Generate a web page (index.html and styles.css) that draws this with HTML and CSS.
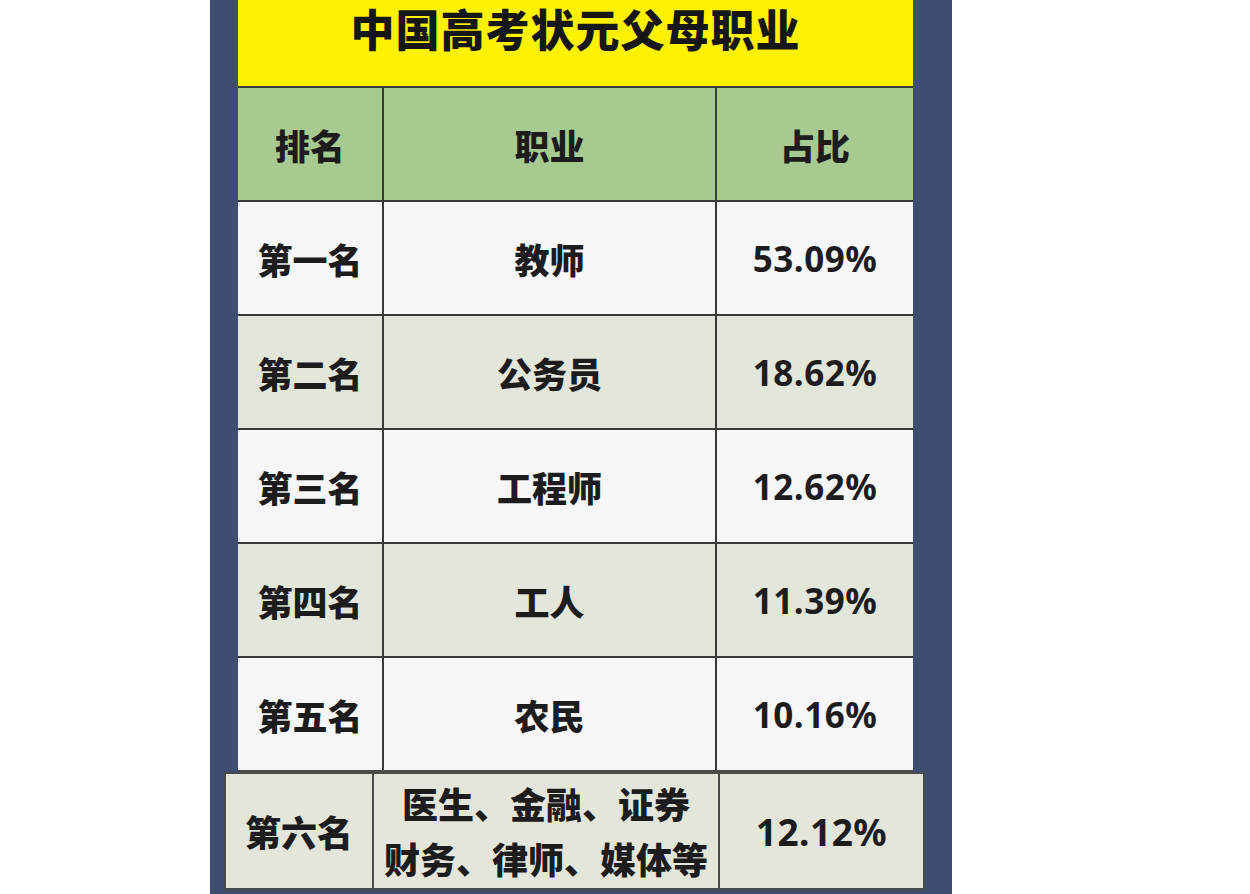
FILE: index.html
```html
<!DOCTYPE html>
<html lang="zh">
<head>
<meta charset="utf-8">
<title>中国高考状元父母职业</title>
<link rel="stylesheet" href="styles.css">
</head>
<body>
<div class="panel">
  <div class="sheet">
    <div class="title">中国高考状元父母职业</div>
    <div class="cell head">排名</div>
    <div class="cell head">职业</div>
    <div class="cell head">占比</div>

    <div class="cell light">第一名</div>
    <div class="cell light">教师</div>
    <div class="cell light num">53.09%</div>

    <div class="cell gray">第二名</div>
    <div class="cell gray">公务员</div>
    <div class="cell gray num">18.62%</div>

    <div class="cell light">第三名</div>
    <div class="cell light">工程师</div>
    <div class="cell light num">12.62%</div>

    <div class="cell gray">第四名</div>
    <div class="cell gray">工人</div>
    <div class="cell gray num">11.39%</div>

    <div class="cell light">第五名</div>
    <div class="cell light">农民</div>
    <div class="cell light num">10.16%</div>
  </div>
  <div class="extra">
    <div class="cell ex">第六名</div>
    <div class="cell ex multi"><span>医生、金融、证券</span><span>财务、律师、媒体等</span></div>
    <div class="cell ex num big">12.12%</div>
  </div>
</div>
</body>
</html>
```
FILE: styles.css
```css
html, body {
  margin: 0;
  padding: 0;
  background: #ffffff;
}
body {
  font-family: "Noto Sans", "Noto Sans CJK SC", sans-serif;
  color: #1c1c1c;
}
.panel {
  margin-left: 210px;
  width: 742px;
  height: 894px;
  background: #3e4e70;
  overflow: hidden;
}
.sheet {
  margin: 0 39px 0 28px;
  display: grid;
  grid-template-columns: 144px 331px 196px;
  grid-template-rows: 86px repeat(6, 112px);
  gap: 2px;
  background: #3a3a38;
  border-bottom: 2px solid #4a4a48;
}
.title {
  grid-column: 1 / 4;
  background: #fff200;
  display: flex;
  align-items: flex-start;
  justify-content: center;
  padding-top: 4px;
  font-family: "Noto Sans CJK SC", sans-serif;
  font-weight: 900;
  font-size: 44px;
  line-height: 1.1;
  letter-spacing: 1px;
  color: #161616;
}
.cell {
  display: flex;
  align-items: center;
  justify-content: center;
  font-family: "Noto Sans CJK SC", sans-serif;
  font-weight: 900;
  font-size: 35px;
  line-height: 1;
}
.head { background: #a8c98f; }
.light { background: #f7f7fa; }
.gray { background: #e3e6da; }
.num {
  font-family: "Noto Sans", "Noto Sans CJK SC", sans-serif;
  font-weight: 700;
  font-size: 35px;
  letter-spacing: 0.5px;
}
.extra {
  margin: 0 27px 0 14px;
  display: grid;
  grid-template-columns: 146px 344px 203px;
  height: 114px;
  gap: 2px;
  background: #4a4a4a;
  border: 2px solid #4a4a4a;
}
.ex {
  background: #e4e6dc;
  font-size: 36px;
}
.multi {
  flex-direction: column;
  font-size: 36px;
  line-height: 55px;
}
.multi span { display: block; white-space: nowrap; }
.big { font-size: 37px; }
```
